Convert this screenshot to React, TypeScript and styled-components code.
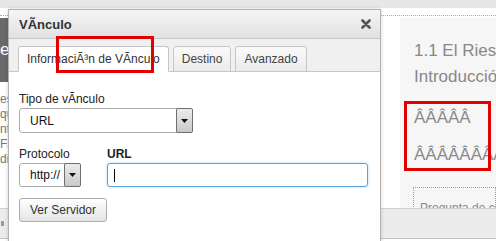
import React from "react";
import styled, { createGlobalStyle } from "styled-components";

const Global = createGlobalStyle`
  html, body { margin: 0; padding: 0; background: #fff; }
  body { font-family: "Liberation Sans", Arial, sans-serif; }
  * { box-sizing: border-box; }
`;

const Page = styled.div`
  position: relative;
  width: 496px;
  height: 241px;
  overflow: hidden;
  background: #fff;
  display: flex;
  flex-direction: column;
  font-family: "Liberation Sans", Arial, sans-serif;
`;

const TopStrip = styled.div`
  flex: none;
  height: 8px;
  background: #e7e7e7;
`;

const Main = styled.div`
  flex: none;
  margin-top: 7px;
  height: 193px;
  border-top: 1px dotted #c9a0a0;
  display: flex;
`;

const LeftCol = styled.div`
  flex: none;
  width: 400px;
  display: flex;
  flex-direction: column;
`;

const DarkBar = styled.div`
  margin-top: 2px;
  width: 320px;
  height: 64px;
  background: #6a6a6a;
  color: #fff;
  font-size: 17px;
  display: flex;
  align-items: center;
  white-space: nowrap;
`;

const BgText = styled.div`
  margin-top: 10px;
  font-size: 12px;
  line-height: 15px;
  color: #777;
  white-space: nowrap;
`;

const RightCol = styled.div`
  flex: 1;
  display: flex;
  flex-direction: column;
  overflow: hidden;
`;

const Panel = styled.div`
  flex: 1;
  margin-top: 2px;
  background: #f6f6f6;
  padding: 20px 0 0 14px;
  white-space: nowrap;
  overflow: hidden;
`;

const Heading = styled.h2`
  margin: 0;
  font-size: 17px;
  font-weight: normal;
  line-height: 26px;
  color: #888;
`;

const Para = styled.p<{ $top: number }>`
  margin: ${(p) => p.$top}px 0 0 0;
  font-size: 17px;
  line-height: 26px;
  color: #8a8a8a;
`;

const QuestionBox = styled.div`
  margin-top: 19px;
  margin-left: -1px;
  border: 1px dotted #e08585;
  padding: 13px 6px;
  font-size: 12px;
  color: #888;
`;

const Footer = styled.div`
  flex: none;
  height: 31px;
  background: #ececec;
  border-top: 1px solid #cfcfcf;
  border-bottom: 1px solid #c4c4c4;
  display: flex;
  align-items: center;
`;

const FooterMark = styled.div`
  width: 3px;
  height: 5px;
  margin-left: 1px;
  background: #9a9a9a;
`;

/* Dialog */

const Dialog = styled.div`
  position: absolute;
  left: 8px;
  top: 9px;
  width: 373px;
  height: 262px;
  border: 1px solid #b3b3b3;
  background: #fff;
  box-shadow: 0 0 4px rgba(0, 0, 0, 0.18);
  display: flex;
  flex-direction: column;
`;

const TitleBar = styled.div`
  flex: none;
  height: 29px;
  border-bottom: 1px solid #c6c6c6;
  background: linear-gradient(#f5f5f5, #e1e1e1);
  display: flex;
  align-items: center;
  justify-content: space-between;
  padding: 0 9px 0 10px;
`;

const Title = styled.span`
  font-size: 13px;
  font-weight: bold;
  color: #333;
`;

const CloseIcon = () => (
  <svg width="10" height="10" viewBox="0 0 10 10" style={{ display: "block" }}>
    <path d="M1.5 1.5 L8.5 8.5 M8.5 1.5 L1.5 8.5" stroke="#555" strokeWidth="2.6" strokeLinecap="round" />
  </svg>
);

const TabStrip = styled.div`
  flex: none;
  display: flex;
  align-items: flex-end;
  gap: 4px;
  padding: 6px 0 0 9px;
  height: 33px;
  background: #f0f0f0;
  border-bottom: 1px solid #c6c6c6;
`;

const Tab = styled.div<{ $active?: boolean }>`
  height: 26px;
  margin-bottom: -1px;
  padding: 0 8px;
  display: flex;
  align-items: center;
  font-size: 12px;
  color: ${(p) => (p.$active ? "#333" : "#444")};
  border: 1px solid #c6c6c6;
  border-bottom-color: ${(p) => (p.$active ? "#fff" : "#c6c6c6")};
  border-radius: 3px 3px 0 0;
  background: ${(p) => (p.$active ? "#fff" : "linear-gradient(#fafafa, #ebebeb)")};
  white-space: nowrap;
`;

const Body = styled.div`
  flex: 1;
  padding: 20px 10px 0 10px;
  display: flex;
  flex-direction: column;
  align-items: flex-start;
`;

const Label = styled.div<{ $bold?: boolean }>`
  font-size: 12px;
  line-height: 14px;
  color: #222;
  font-weight: ${(p) => (p.$bold ? "bold" : "normal")};
  margin-bottom: 2px;
  white-space: nowrap;
`;

const SelectBox = styled.div<{ $w: number; $h: number }>`
  width: ${(p) => p.$w}px;
  height: ${(p) => p.$h}px;
  border: 1px solid #acacac;
  border-radius: 3px;
  background: #fff;
  display: flex;
  align-items: stretch;
`;

const SelectValue = styled.div`
  flex: 1;
  display: flex;
  align-items: center;
  padding-left: 10px;
  font-size: 12px;
  color: #111;
`;

const ArrowBox = styled.div`
  width: 17px;
  margin: -1px -1px -1px 0;
  border: 1px solid #6f6f6f;
  border-radius: 2px;
  background: linear-gradient(#ececec, #c9c9c9);
  display: flex;
  align-items: center;
  justify-content: center;
`;

const Arrow = () => (
  <svg width="7" height="4" viewBox="0 0 7 4" style={{ display: "block" }}>
    <path d="M0 0 H7 L3.5 4 Z" fill="#111" />
  </svg>
);

const Select = ({ value, w, h }: { value: string; w: number; h: number }) => (
  <SelectBox $w={w} $h={h}>
    <SelectValue>{value}</SelectValue>
    <ArrowBox>
      <Arrow />
    </ArrowBox>
  </SelectBox>
);

const Row = styled.div`
  margin-top: 14px;
  display: flex;
`;

const Field = styled.div<{ $w?: number }>`
  width: ${(p) => (p.$w ? `${p.$w}px` : "auto")};
  display: flex;
  flex-direction: column;
`;

const TextInput = styled.div`
  width: 261px;
  height: 24px;
  border: 1px solid #5d9fd6;
  border-radius: 3px;
  box-shadow: 0 0 3px rgba(82, 160, 230, 0.45);
  display: flex;
  align-items: center;
  padding-left: 6px;
`;

const Caret = styled.div`
  width: 1px;
  height: 13px;
  background: #000;
`;

const Button = styled.div`
  margin-top: 11px;
  height: 24px;
  padding: 0 10px;
  display: flex;
  align-items: center;
  font-size: 12px;
  color: #333;
  border: 1px solid #acacac;
  border-radius: 3px;
  background: linear-gradient(#ffffff, #e4e4e4);
`;

const Mark = styled.div<{ $x: number; $y: number; $w: number; $h: number }>`
  position: absolute;
  left: ${(p) => p.$x}px;
  top: ${(p) => p.$y}px;
  width: ${(p) => p.$w}px;
  height: ${(p) => p.$h}px;
  border: 3px solid #e30000;
`;

export default function App() {
  return (
    <>
      <Global />
      <Page>
        <TopStrip />
        <Main>
          <LeftCol>
            <DarkBar>e</DarkBar>
            <BgText>
              es
              <br />
              que
              <br />
              nte
              <br />
              Fac
              <br />
              dic
            </BgText>
          </LeftCol>
          <RightCol>
            <Panel>
              <Heading>
                1.1 El Riesgo
                <br />
                Introducción
              </Heading>
              <Para $top={15}>ÂÂÂÂÂ</Para>
              <Para $top={11}>ÂÂÂÂÂÂÂÂ</Para>
              <QuestionBox>Pregunta de control</QuestionBox>
            </Panel>
          </RightCol>
        </Main>
        <Footer>
          <FooterMark />
        </Footer>

        <Dialog>
          <TitleBar>
            <Title>VÃnculo</Title>
            <CloseIcon />
          </TitleBar>
          <TabStrip>
            <Tab $active>InformaciÃ³n de VÃnculo</Tab>
            <Tab>Destino</Tab>
            <Tab>Avanzado</Tab>
          </TabStrip>
          <Body>
            <Label>Tipo de vÃnculo</Label>
            <Select value="URL" w={174} h={25} />
            <Row>
              <Field $w={88}>
                <Label>Protocolo</Label>
                <Select value="http://" w={62} h={24} />
              </Field>
              <Field>
                <Label $bold>URL</Label>
                <TextInput>
                  <Caret />
                </TextInput>
              </Field>
            </Row>
            <Button>Ver Servidor</Button>
          </Body>
        </Dialog>

        <Mark $x={56} $y={36} $w={98} $h={37} />
        <Mark $x={404} $y={101} $w={87} $h={70} />
      </Page>
    </>
  );
}
